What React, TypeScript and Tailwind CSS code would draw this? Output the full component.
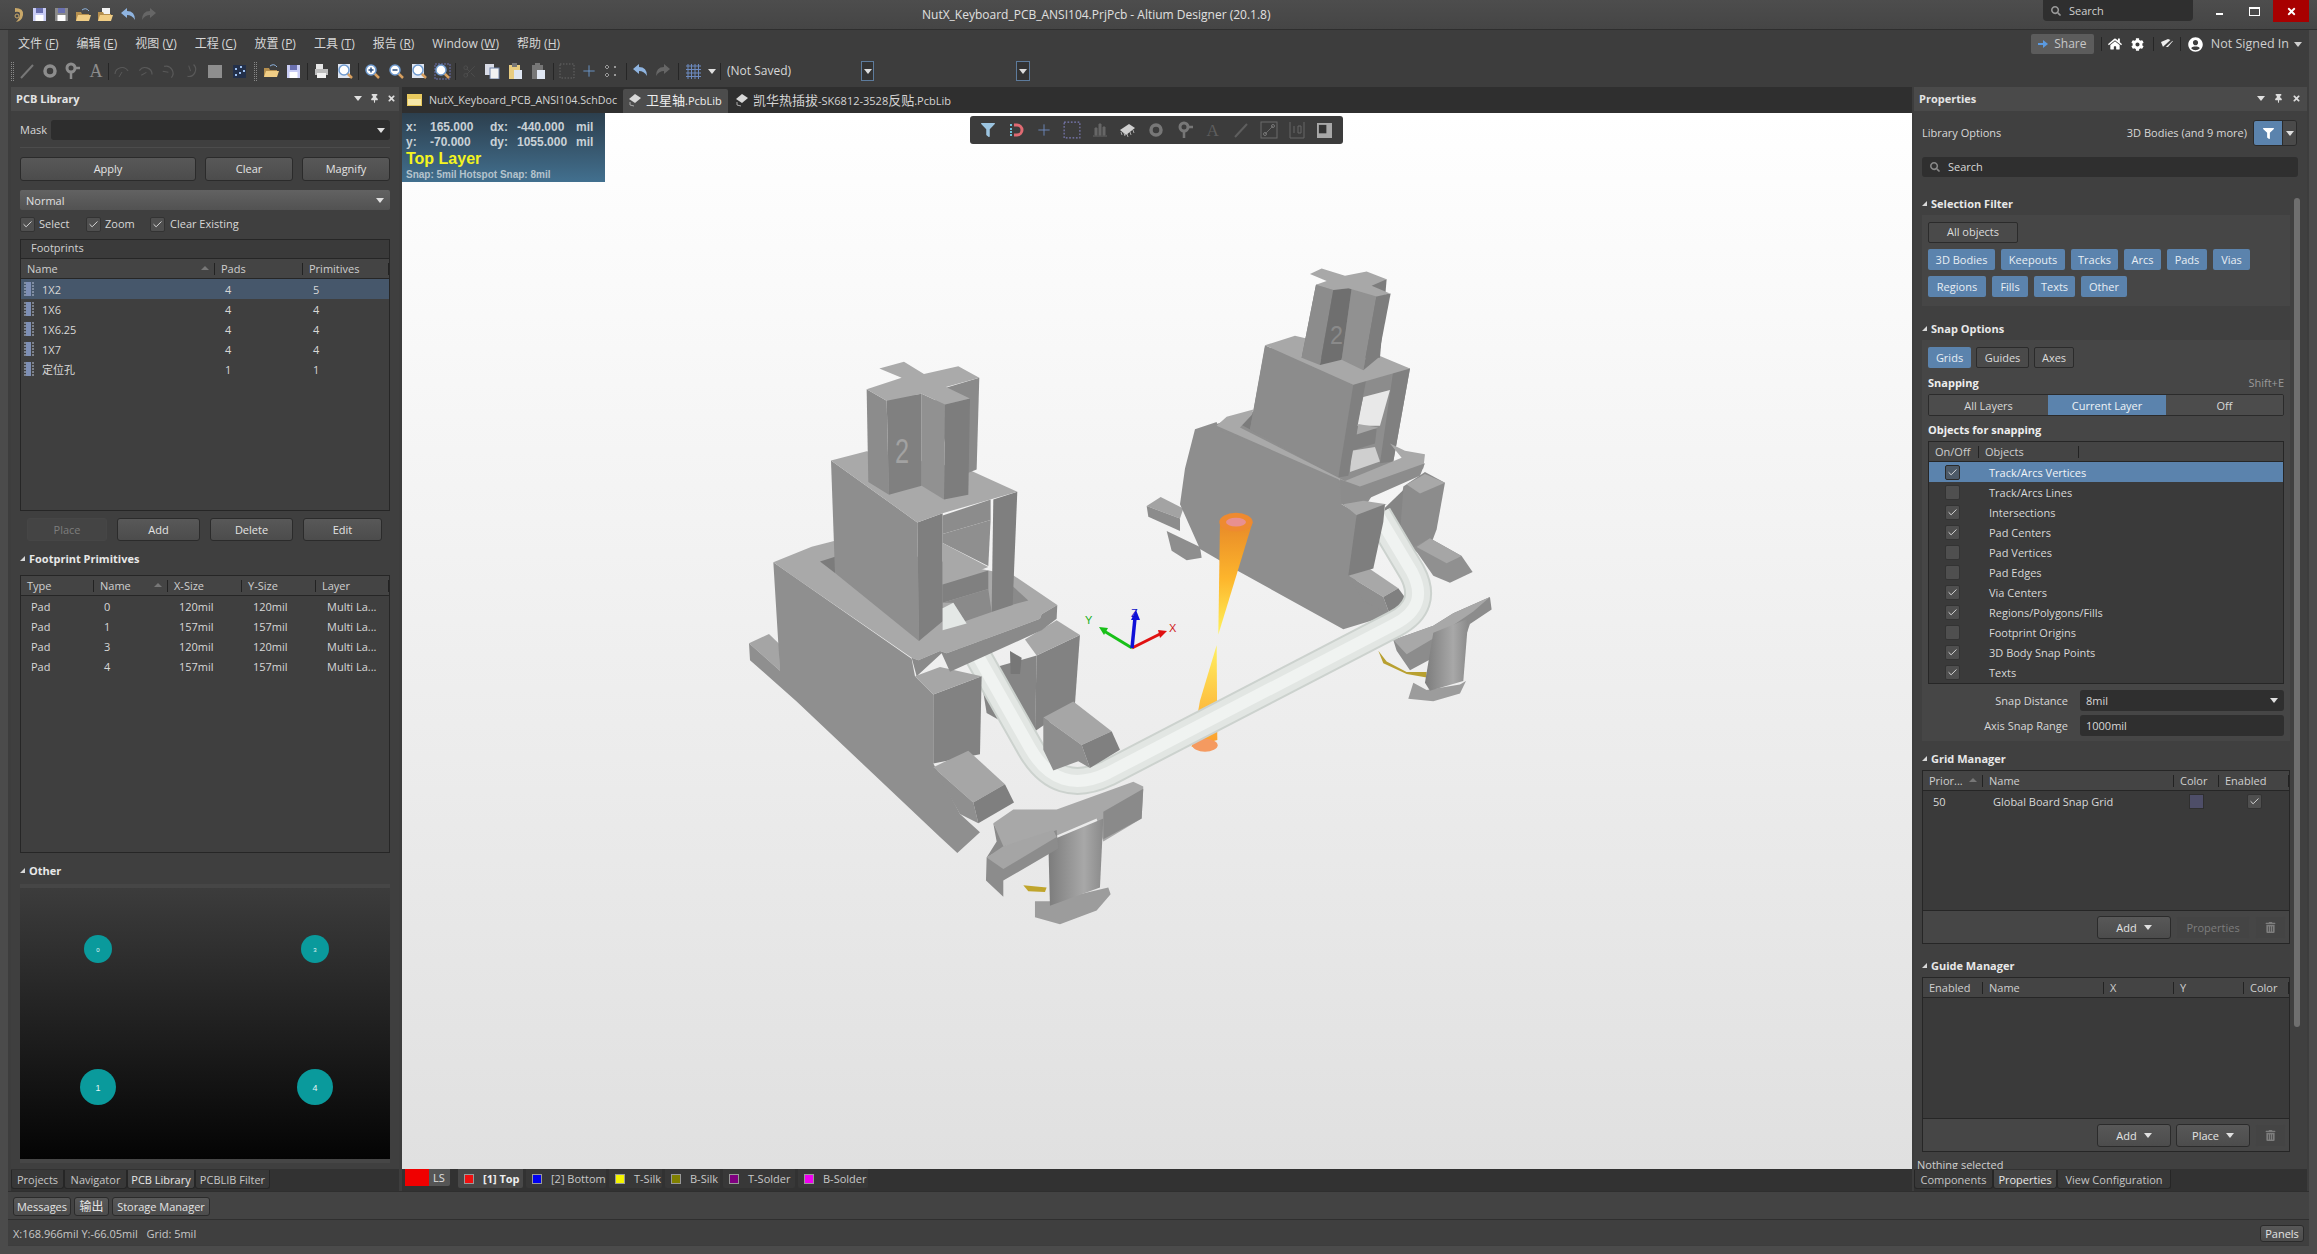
import { ReactNode } from 'react';
import { Check, Plus, Scissors } from 'lucide-react';
import { FaCog, FaFilter, FaHome, FaSearch, FaThumbtack, FaTimes, FaTrashAlt, FaUserCircle } from 'react-icons/fa';

// small toolbar drawings ----------------------------------------------------
const Floppy = ({ c = '#c9cdf5' }: { c?: string }) => (
  <svg width="15" height="15" viewBox="0 0 15 15"><rect x="1" y="1" width="13" height="13" fill={c} /><rect x="4" y="1" width="7" height="5" fill="#6a70b0" /><rect x="3.5" y="8" width="8" height="6" fill="#fff" /></svg>
);
const Folder = ({ second }: { second?: boolean }) => (
  <svg width="17" height="16" viewBox="0 0 17 16">
    {second && <rect x="5" y="1" width="8" height="9" fill="#f2f2f2" />}
    {!second && <path d="M7 3 Q11 0 14 4" fill="none" stroke="#8fb4e0" strokeWidth="1" />}
    <path d="M1 5h5l1 2h7v7H1z" fill="#b58f4e" /><path d="M3 8h13l-2 6H1z" fill="#f0cd85" />
  </svg>
);
const Arrow = ({ back, c }: { back?: boolean; c: string }) => (
  <svg width="16" height="14" viewBox="0 0 16 14" style={{ transform: back ? undefined : 'scaleX(-1)' }}>
    <path d="M1 5 L7 0 V3 Q15 3 15 12 Q12 7 7 7 V10 Z" fill={c} />
  </svg>
);
const Lens = ({ sign, boxed, paper }: { sign?: '+' | '-'; boxed?: boolean; paper?: boolean }) => (
  <svg width="17" height="17" viewBox="0 0 17 17">
    {paper && <rect x="1" y="1" width="12" height="14" fill="#dfe6f2" />}
    {boxed && <rect x="1" y="1" width="15" height="15" fill="none" stroke="#6a70b0" strokeDasharray="2 1" />}
    <path d="M10 10 L15 15" stroke="#d8a060" strokeWidth="2.5" />
    <circle cx="7" cy="7" r="5" fill="#fff" stroke="#6f9bd0" strokeWidth="1.5" />
    {sign && <path d="M4.5 7h5" stroke="#2b4f80" strokeWidth="1.5" />}
    {sign === '+' && <path d="M7 4.5v5" stroke="#2b4f80" strokeWidth="1.5" />}
  </svg>
);
const LineTool = ({ c = '#777' }: { c?: string }) => <svg width="16" height="16" viewBox="0 0 16 16"><path d="M2 15 L14 2" stroke={c} strokeWidth="2" /></svg>;
const PadTool = ({ c = '#8d8d8d' }: { c?: string }) => <svg width="16" height="16" viewBox="0 0 16 16"><circle cx="8" cy="8" r="5" fill="none" stroke={c} strokeWidth="3.5" /></svg>;
const ViaTool = ({ c = '#8d8d8d' }: { c?: string }) => (
  <svg width="16" height="18" viewBox="0 0 16 18"><circle cx="7" cy="6" r="4" fill="none" stroke={c} strokeWidth="3" /><path d="M7 10v7M11 6h5" stroke={c} strokeWidth="2.5" /></svg>
);
const ArcTool = ({ r = 0 }: { r?: number }) => (
  <svg width="16" height="16" viewBox="0 0 16 16" style={{ transform: `rotate(${r}deg)` }}><path d="M2 11 A7 7 0 0 1 15 8" fill="none" stroke="#595959" strokeWidth="1.2" /><path d="M6 14 L9 9" stroke="#595959" /></svg>
);
const Chip = ({ c = '#7e8fb5' }: { c?: string }) => (
  <svg width="12" height="14" viewBox="0 0 12 14"><rect x="2" y="0" width="5" height="14" fill={c} /><path d="M0 1h2M0 4h2M0 7h2M0 10h2M0 13h2M8 1h2M8 4h2M8 7h2M8 10h2M8 13h2" stroke="#b9c3d8" strokeWidth="1.2" /></svg>
);
const Doc = ({ c = '#e6e6e6' }: { c?: string }) => (
  <svg width="15" height="16" viewBox="0 0 15 16"><rect x="2" y="1" width="7" height="6" fill={c} /><rect x="1" y="6" width="13" height="6" fill="#bdbdbd" /><rect x="3" y="10" width="9" height="5" fill="#f2f2f2" /></svg>
);
const Clip = ({ c }: { c: string }) => (
  <svg width="16" height="17" viewBox="0 0 16 17"><rect x="2" y="2" width="11" height="14" fill={c} /><rect x="5" y="0" width="5" height="4" fill="#777" /><rect x="7" y="7" width="8" height="9" fill="#dfe6f2" /></svg>
);
const Copy2 = () => <svg width="16" height="16" viewBox="0 0 16 16"><rect x="1" y="1" width="9" height="11" fill="#d8dbe6" /><rect x="6" y="5" width="9" height="11" fill="#f2f2f2" stroke="#6f82a8" /></svg>;
const Dotted = ({ c = '#666', s = 16 }: { c?: string; s?: number }) => (
  <svg width={s} height={s} viewBox="0 0 16 16"><rect x="1" y="1" width="14" height="14" fill="none" stroke={c} strokeDasharray="1.5 1.5" /></svg>
);
const Align = () => <svg width="14" height="16" viewBox="0 0 14 16"><path d="M3 2l2 2-2 2-2-2zM3 10l2 2-2 2-2-2z" fill="none" stroke="#999" /><path d="M11 3v2M11 11v2" stroke="#999" strokeWidth="2" /></svg>;
const GridIcon = () => (
  <svg width="15" height="15" viewBox="0 0 15 15"><path d="M0 2h15M0 5.5h15M0 9h15M0 12.5h15M2 0v15M5.5 0v15M9 0v15M12.5 0v15" stroke="#6d8bc0" /></svg>
);
const Caret = ({ c = '#e0e0e0' }: { c?: string }) => <svg width="8" height="5" viewBox="0 0 8 5"><path d="M0 0h8L4 5z" fill={c} /></svg>;

const Grip = () => <div className="h-[19px] w-[3px] shrink-0 border-x border-dotted border-[#888]" />;
const Sep = () => <div className="h-[17px] w-px shrink-0 bg-[#262626]" />;
const Slot = ({ w = 'w-[23px]', children }: { w?: string; children: ReactNode }) => (
  <div className={`flex shrink-0 items-center justify-center ${w}`}>{children}</div>
);

// shared bits -----------------------------------------------------------------
const Btn = ({ w, h = 'h-[23px]', children, off }: { w: string; h?: string; children: ReactNode; off?: boolean }) => (
  <div className={`flex shrink-0 items-center justify-center gap-[7px] rounded-[3px] border ${w} ${h} ${off ? 'border-[#464646] bg-[#444] text-[#7d7d7d]' : 'border-[#2b2b2b] bg-gradient-to-b from-[#585858] to-[#4c4c4c] text-[#e4e4e4]'}`}>
    {children}
  </div>
);
const Blue = ({ w, children }: { w: string; children: ReactNode }) => (
  <div className={`flex h-[21px] shrink-0 items-center justify-center rounded-[2px] bg-[#5b83ad] text-[#e8eef4] ${w}`}>{children}</div>
);
const Gray = ({ w, children }: { w: string; children: ReactNode }) => (
  <div className={`flex h-[21px] shrink-0 items-center justify-center rounded-[2px] border border-[#2b2b2b] bg-[#4a4a4a] text-[#dcdcdc] ${w}`}>{children}</div>
);
const Box = ({ on, dark }: { on?: boolean; dark?: boolean }) => (
  <div className={`flex h-[15px] w-[15px] shrink-0 items-center justify-center rounded-[2px] border ${dark ? 'border-[#2a2a2a] bg-[#4d5a68]' : 'border-[#333] bg-[#4f4f4f]'}`}>
    {on && <Check size={11} strokeWidth={1.8} className="text-[#f2f2f2]" />}
  </div>
);
const SectionTitle = ({ children, cls }: { children: ReactNode; cls: string }) => (
  <div className={`flex h-[16px] shrink-0 items-center gap-[4px] font-bold text-[#e8e8e8] ${cls}`}>
    <svg width="5" height="5" viewBox="0 0 5 5"><path d="M5 0v5H0z" fill="#d8d8d8" /></svg>
    {children}
  </div>
);
const Th = ({ w, children, sort }: { w: string; children: ReactNode; sort?: boolean }) => (
  <div className={`relative flex h-full shrink-0 items-center pl-[6px] text-[#cfcfcf] ${w}`}>
    {children}
    {sort && <svg className="absolute right-[6px] top-[7px]" width="8" height="4" viewBox="0 0 8 4"><path d="M4 0l4 4H0z" fill="#777" /></svg>}
    <div className="absolute right-0 top-[4px] h-[12px] w-px bg-[#222]" />
  </div>
);
const DockTab = ({ w, on, children }: { w: string; on?: boolean; children: ReactNode }) => (
  <div className={`flex h-[19px] shrink-0 items-center justify-center rounded-b-[3px] border border-t-0 border-[#262626] ${w} ${on ? 'bg-[#444] text-[#e8e8e8]' : 'bg-[#383838] text-[#c6c6c6]'}`}>{children}</div>
);
const LayerTab = ({ w, c, on, children }: { w: string; c: string; on?: boolean; children: ReactNode }) => (
  <div className={`flex h-[19px] shrink-0 items-center gap-[9px] rounded-b-[2px] pl-[6px] ${w} ${on ? 'bg-[#484848] font-bold text-[#eee]' : 'bg-[#383838] text-[#c8c8c8]'}`}>
    <div className="h-[10px] w-[10px] border border-[#999]" style={{ background: c }} />
    {children}
  </div>
);
const Cjk = ({ children }: { children: ReactNode }) => <span className="text-[13px]">{children}</span>;

const snapObjects: [string, boolean][] = [
  ['Track/Arcs Vertices', true],
  ['Track/Arcs Lines', false],
  ['Intersections', true],
  ['Pad Centers', true],
  ['Pad Vertices', false],
  ['Pad Edges', false],
  ['Via Centers', true],
  ['Regions/Polygons/Fills', true],
  ['Footprint Origins', false],
  ['3D Body Snap Points', true],
  ['Texts', true],
];
const footprints = [['1X2', '4', '5'], ['1X6', '4', '4'], ['1X6.25', '4', '4'], ['1X7', '4', '4'], ['定位孔', '1', '1']];
const pads = [['0', '120mil'], ['1', '157mil'], ['3', '120mil'], ['4', '157mil']];

// the 3D model -----------------------------------------------------------------
const P = ({ f, p }: { f: string; p: string }) => <polygon fill={f} points={p} />;

function LeftRear() {
  return (
    <g transform="translate(720 240) scale(0.3333 0.4592)">
      <P f="#858585" p="780,940 950,905 945,1090 800,1030" />
      <P f="#828282" p="950,905 1080,860 1065,1010 945,1070" />
      <P f="#a7a7a7" p="915,870 1010,828 1080,860 950,905" />
      <P f="#777" p="870,895 905,910 900,945 872,945" />
    </g>
  );
}
function LeftFront() {
  return (
    <g transform="translate(720 240) scale(0.3333 0.4592)">
      {/* lower body */}
      <P f="#a5a5a5" p="87,878 147,858 178,880 180,938" />
      <P f="#8f8f8f" p="160,702 575,912 585,950 640,990 640,1140 720,1250 780,1290 712,1335 660,1300 230,1005 90,915 87,878 180,938" />
      <P f="#828282" p="640,990 785,950 780,1120 640,1140" />
      <P f="#a6a6a6" p="585,950 660,930 785,950 640,990" />
      {/* front tab */}
      <P f="#a6a6a6" p="640,1148 745,1112 855,1185 760,1225" />
      <P f="#8f8f8f" p="640,1148 760,1225 775,1270 720,1250" />
      <P f="#7f7f7f" p="760,1225 855,1185 882,1225 775,1270" />
      {/* frame */}
      <P f="#a9a9a9" p="160,702 275,668 345,655 880,730 1012,795 965,815 960,825 680,900 660,895 595,915 575,910 215,730" />
      <P f="#8a8a8a" p="575,910 595,915 660,895 680,900 960,825 965,815 1012,795 1010,825 965,850 690,940 665,900 590,950" />
      <P f="#7c7c7c" p="300,700 345,690 345,725" />
      <P f="#8a8a8a" p="880,755 925,785 850,800 815,790" />
      {/* tower */}
      <P f="#8e8e8e" p="333,480 592,615 597,873 345,725" />
      <P f="#7f7f7f" p="592,615 668,595 668,830 597,873" />
      <P f="#7f7f7f" p="820,565 892,548 878,795 815,810" />
      <P f="#8c8c8c" p="668,600 812,565 812,610 668,640" />
      <P f="#8f8f8f" p="668,640 812,610 805,710 668,660" />
      <P f="#a8a8a8" p="668,660 805,712 668,750" />
      <P f="#808080" p="668,750 805,720 805,760 668,790" />
      <P f="#8a8a8a" p="668,790 805,760 815,810 735,830 700,790" />
      <P f="#e4e8e6" p="668,802 700,790 740,835 668,850" />
      <P f="#a9a9a9" p="333,480 440,460 745,500 892,548 668,595 592,615" />
      {/* stem */}
      <P f="#8a8a8a" p="640,330 778,300 770,500 700,520" />
      <P f="#8c8c8c" p="440,325 500,350 507,555 445,527" />
      <P f="#808080" p="500,345 605,335 605,535 507,555" />
      <P f="#919191" p="605,335 675,358 672,565 605,535" />
      <P f="#7d7d7d" p="675,358 750,345 745,555 672,565" />
      <P f="#aaa" p="478,280 552,265 612,292 715,275 778,300 678,320 750,345 675,358 605,335 500,350 440,325 545,300" />
      <text x="525" y="485" fontSize="76" fill="#a2a2a2" fontFamily="Liberation Sans, sans-serif">2</text>
      {/* right tab sits over the wire */}
      <P f="#a6a6a6" p="970,1040 1060,1005 1175,1070 1085,1100" />
      <P f="#8e8e8e" p="970,1040 1085,1100 1110,1150 1075,1135 1000,1155 970,1110" />
      <P f="#808080" p="1085,1100 1175,1070 1200,1110 1110,1150" />
      {/* bottom clip */}
      <P f="#8a8a8a" p="820,1270 860,1320 800,1345 830,1310" />
      <P f="#a8a8a8" p="820,1270 880,1240 1010,1240 1240,1180 1270,1190 1265,1260 1150,1310 1130,1260 1000,1300 850,1320" />
      <P f="#8a8a8a" p="1150,1245 1270,1195 1265,1260 1150,1305" />
      <P f="#c0a52c" p="910,1405 980,1410 975,1420 925,1418" />
      <P f="#9c9c9c" p="945,1440 990,1440 1165,1410 1172,1425 1130,1460 1020,1490 945,1475" />
      <P f="url(#cyl)" p="985,1310 1150,1260 1140,1410 990,1450" />
      <P f="#8c8c8c" p="800,1345 1010,1285 1015,1325 850,1395 850,1430 798,1395" />
      <P f="#a5a5a5" p="800,1345 850,1320 1000,1285 1010,1300 850,1370" />
    </g>
  );
}
const rightScale = 'translate(1100 240) scale(0.3333 0.3571)';
function RightBody() {
  return (
    <g transform={rightScale}>
      <P f="#8c8c8c" p="910,690 975,650 1035,680 1010,810 990,860 960,880 890,830" />
      <P f="#858585" p="855,750 910,700 900,820 850,790" />
      <P f="#a8a8a8" p="920,685 975,655 1035,680 960,710" />
      <P f="#909090" p="940,860 990,835 1085,885 1118,930 1050,960 1000,940" />
      <P f="#a6a6a6" p="950,860 990,835 1085,885 1040,905" />
      {/* foot */}
      <P f="#8e8e8e" p="200,815 300,860 305,890 260,897 215,870" />
      <P f="#a3a3a3" p="140,745 182,720 250,752 240,780" />
      <P f="#8c8c8c" p="140,745 240,780 240,815 145,775" />
      {/* backing so no slits show between the faces */}
      <P f="#8e8e8e" p="350,515 460,480 495,300 930,360 880,620 780,770 350,530" />
      {/* body */}
      <P f="#8e8e8e" p="285,530 350,510 355,530 715,665 725,740 780,770 750,935 870,1050 730,1090 410,925 300,865 240,740 255,640" />
      {/* tower */}
      <P f="#808080" p="880,365 930,360 880,620 840,625" />
      <P f="#8c8c8c" p="800,385 875,365 870,420 790,440" />
      <P f="#e8e8e8" p="790,440 870,420 840,520 770,520" />
      <P f="#808080" p="770,520 830,530 825,570 755,590" />
      <P f="#a8a8a8" p="775,515 835,525 770,545" />
      <P f="#cfcfcf" p="755,590 825,580 840,620 750,650" />
      <P f="#7c7c7c" p="420,515 460,485 450,530 715,665 735,675" />
      <P f="#8c8c8c" p="495,295 760,405 715,665 450,530" />
      <P f="#808080" p="760,405 800,385 745,660 715,665" />
      <P f="#a8a8a8" p="495,295 585,268 840,325 930,360 760,405" />
      {/* frame */}
      <P f="#a9a9a9" p="350,520 380,495 460,475 455,490 420,525 735,675 905,610 870,570 915,590 975,600 970,640 780,695 740,690 715,670" />
      <P f="#8c8c8c" p="720,670 780,690 975,625 960,660 790,730 725,740" />
      {/* stem */}
      <P f="#7d7d7d" p="648,125 860,110 840,330 605,330" />
      <P f="#8c8c8c" p="648,125 700,140 660,350 605,330" />
      <P f="#6f6f6f" p="700,140 755,135 725,335 660,350" />
      <P f="#919191" p="755,135 830,155 790,365 725,335" />
      <P f="#7d7d7d" p="830,155 872,150 835,330 790,365" />
      <P f="#a8a8a8" p="630,95 665,80 735,100 800,88 860,110 815,128 870,150 830,158 745,135 700,140 648,125 680,115" />
      <text x="690" y="290" fontSize="70" fill="#8a8a8a" fontFamily="Liberation Sans, sans-serif">2</text>
      {/* front tab and clip, wire runs over them */}
      <P f="#a8a8a8" p="745,940 800,915 895,975 850,1000" />
      <P f="#8e8e8e" p="745,940 850,1000 870,1050 790,1010" />
      <P f="#808080" p="850,1000 895,975 930,1020 870,1050" />
      <P f="#b8a030" p="835,1150 860,1180 920,1210 980,1210 980,1225 920,1215 850,1185" />
      <P f="#8c8c8c" p="880,1120 1000,1080 1060,1045 1170,1000 1175,1035 1110,1075 1090,1130 1000,1170 930,1205 890,1150" />
      <P f="#a8a8a8" p="880,1120 1000,1080 1060,1045 1170,1000 1120,1040 1010,1110 920,1160" />
      <P f="#9c9c9c" p="925,1285 940,1240 980,1260 1080,1245 1098,1235 1080,1270 1000,1292" />
      <P f="url(#cyl)" p="1000,1100 1105,1060 1090,1235 990,1262 975,1240" />
      {/* cone */}
      <polygon fill="url(#cone)" points="360,790 458,790 355,1105" />
      <polygon fill="url(#cone2)" points="350,1135 352,1400 275,1420 300,1290" />
      <ellipse cx="408" cy="790" rx="50" ry="26" fill="#ee8a30" />
      <ellipse cx="408" cy="790" rx="30" ry="12" fill="#e89090" />
      <ellipse cx="315" cy="1415" rx="38" ry="18" fill="#f59a60" />
    </g>
  );
}
function RightOver() {
  return (
    <g transform={rightScale}>
      <P f="#a8a8a8" p="730,740 790,730 860,740 775,775" />
      <P f="#7e7e7e" p="770,770 855,740 850,790 820,920 745,940" />
    </g>
  );
}
function Model() {
  const wire = 'M948 603 L1030 748 Q1058 797 1108 773 L1395 624 Q1430 606 1412 572 L1378 515';
  return (
    <svg className="h-full w-full" viewBox="402 113 1510 1056">
      <defs>
        <linearGradient id="cyl" x1="0" x2="1" y1="0" y2="0">
          <stop offset="0" stopColor="#7c7c7c" /><stop offset="0.65" stopColor="#a8a8a8" /><stop offset="1" stopColor="#8a8a8a" />
        </linearGradient>
        <linearGradient id="cone" x1="0" x2="0" y1="0" y2="1">
          <stop offset="0" stopColor="#e88a28" /><stop offset="0.5" stopColor="#fdb52c" /><stop offset="1" stopColor="#fff35a" />
        </linearGradient>
        <linearGradient id="cone2" x1="0" x2="0" y1="0" y2="1">
          <stop offset="0" stopColor="#fff060" /><stop offset="1" stopColor="#fc9d2a" />
        </linearGradient>
      </defs>
      <LeftRear />
      <RightBody />
      <path d={wire} fill="none" stroke="#ccd2ce" strokeWidth="28" />
      <path d={wire} fill="none" stroke="#e2e6e3" strokeWidth="24" />
      <path d={wire} fill="none" stroke="#f0f3f1" strokeWidth="12" />
      <RightOver />
      <LeftFront />
      {/* axis gizmo */}
      <path d="M1132 648 L1160 634" stroke="#e01010" strokeWidth="3" />
      <path d="M1167 631 L1158 630 L1160 638 Z" fill="#e01010" />
      <text x="1169" y="632" fontSize="11" fill="#d01818" fontFamily="Liberation Sans, sans-serif">X</text>
      <path d="M1132 648 L1104 631" stroke="#18c018" strokeWidth="3" />
      <path d="M1099 627 L1108 628 L1104 635 Z" fill="#18c018" />
      <text x="1085" y="624" fontSize="11" fill="#18b018" fontFamily="Liberation Sans, sans-serif">Y</text>
      <path d="M1132 648 L1135 618" stroke="#1010d8" strokeWidth="3.5" />
      <path d="M1136 610 L1131 620 L1140 620 Z" fill="#1010d8" />
      <text x="1131" y="617" fontSize="11" fill="#1010c8" fontFamily="Liberation Sans, sans-serif">Z</text>
    </svg>
  );
}

const floatIcons: ReactNode[] = [
  <FaFilter size={14} className="text-[#9cc4e0]" />,
  <svg width="16" height="16" viewBox="0 0 16 16"><path d="M6 3h3a5 5 0 0 1 0 10H6" fill="none" stroke="#e06a72" strokeWidth="3" /><path d="M2 3h2M2 7h2M2 10h2M2 13h2" stroke="#6cc0d8" strokeWidth="2" /></svg>,
  <Plus size={18} strokeWidth={1.2} className="text-[#6d8bc0]" />,
  <Dotted c="#7d7db8" s={18} />,
  <svg width="16" height="16" viewBox="0 0 16 16"><path d="M3 6h2v7H3zM7 2h2v11H7zM11 5h2v8h-2zM1 14h14" stroke="#666" fill="#666" /></svg>,
  <svg width="18" height="16" viewBox="0 0 18 16"><path d="M1 8L10 2l6 4-9 7z" fill="#d0d0d0" /><path d="M2 10l1 3M5 11l1 3M8 12l1 3M11 10l1 3M14 8l1 3" stroke="#aaa" /></svg>,
  <PadTool c="#777" />,
  <ViaTool c="#777" />,
  <span className="font-['Liberation_Serif',serif] text-[17px] leading-none text-[#5e5e5e]">A</span>,
  <LineTool c="#5e5e5e" />,
  <svg width="18" height="18" viewBox="0 0 18 18"><rect x="1" y="1" width="16" height="16" fill="none" stroke="#6a6a6a" /><path d="M5 13L13 5" stroke="#6a6a6a" /><circle cx="5" cy="13" r="1.5" fill="none" stroke="#777" /><circle cx="13" cy="5" r="1.5" fill="none" stroke="#777" /></svg>,
  <svg width="18" height="18" viewBox="0 0 18 18"><path d="M2 1v16h14V1" fill="none" stroke="#666" /><path d="M6 5v7M10 5v7h3V5z" fill="none" stroke="#666" /></svg>,
  <svg width="15" height="15" viewBox="0 0 16 16"><rect x="0" y="0" width="16" height="16" fill="#a8a8a8" /><rect x="2" y="2" width="8" height="9" fill="#333" /></svg>,
];

export default function App() {
  return (
    <div className="flex h-[1254px] w-[2317px] flex-col overflow-hidden bg-[#4b4b4b] font-['Open_Sans','Noto_Sans_CJK_SC',sans-serif] text-[11px] leading-none text-[#d8d8d8]">
      {/* title bar */}
      <div className="flex h-[30px] shrink-0 items-start border-b border-[#2e2e2e] bg-gradient-to-b from-[#4d4d4d] to-[#454545]">
        <div className="flex h-[29px] w-[922px] shrink-0 items-center pl-[10px]">
          <Slot w="w-[18px]">
            <svg width="12" height="18" viewBox="0 0 12 18"><path d="M2 2 Q11 2 10 9 Q9 15 3 16 Q7 12 7 8 Q7 5 2 6Z" fill="#c9a869" /><circle cx="4" cy="10" r="2" fill="none" stroke="#c9a869" /></svg>
          </Slot>
          <Slot><Floppy /></Slot>
          <Slot w="w-[21px]"><Floppy c="#8a8a8a" /></Slot>
          <Slot w="w-[22px]"><Folder /></Slot>
          <Slot w="w-[22px]"><Folder second /></Slot>
          <Slot><Arrow back c="#8fb4e0" /></Slot>
          <Slot w="w-[20px]"><Arrow c="#666" /></Slot>
        </div>
        <div className="flex h-[29px] flex-1 items-center pt-[1px] text-[12px] text-[#e0e0e0]">NutX_Keyboard_PCB_ANSI104.PrjPcb - Altium Designer (20.1.8)</div>
        <div className="flex h-[21px] w-[150px] shrink-0 items-center gap-[8px] rounded-b-[4px] bg-[#2f2f2f] pl-[8px] text-[#cfcfcf]">
          <FaSearch size={10} className="text-[#999]" />Search
        </div>
        <div className="flex h-[22px] w-[80px] shrink-0 items-center justify-around pl-[10px]">
          <div className="mt-[6px] h-[2px] w-[7px] bg-white" />
          <div className="h-[9px] w-[11px] border border-t-2 border-white" />
        </div>
        <div className="flex h-[22px] w-[36px] shrink-0 items-center justify-center bg-[#a80000]"><FaTimes size={11} className="text-white" /></div>
        <div className="w-[8px] shrink-0" />
      </div>

      <div className="mx-[8px] flex h-[1216px] shrink-0 flex-col bg-[#3d3d3d]">
        {/* menu */}
        <div className="flex h-[30px] shrink-0 items-center pb-[2px] pl-[10px] pr-[7px] text-[#d6d6d6]">
          <div className="flex items-center gap-[18px] text-[12px]">
            {[['文件', 'F'], ['编辑', 'E'], ['视图', 'V'], ['工程', 'C'], ['放置', 'P'], ['工具', 'T'], ['报告', 'R'], ['Window', 'W'], ['帮助', 'H']].map(([n, k]) => (
              <span key={n} className="whitespace-nowrap">{n} (<u>{k}</u>)</span>
            ))}
          </div>
          <div className="flex-1" />
          <div className="flex h-[20px] w-[63px] items-center justify-center gap-[6px] rounded-[2px] bg-[#5c5c5c] text-[12px] text-[#c8c8c8]">
            <svg width="10" height="8" viewBox="0 0 10 8"><path d="M0 3h5V0l5 4-5 4V5H0z" fill="#5b9ae0" /></svg>Share
          </div>
          <div className="ml-[7px] h-[14px] w-px bg-[#262626]" />
          <FaHome size={14} className="ml-[6px] text-white" />
          <FaCog size={13} className="ml-[9px] text-white" />
          <div className="ml-[9px] h-[14px] w-px bg-[#262626]" />
          <svg className="ml-[6px]" width="14" height="13" viewBox="0 0 14 13"><path d="M1 4 L8 1 L13 3 L8 9 L3 9Z" fill="#eee" /><path d="M1 12L13 1" stroke="#3d3d3d" strokeWidth="2" /></svg>
          <div className="ml-[6px] h-[14px] w-px bg-[#262626]" />
          <FaUserCircle size={15} className="ml-[7px] text-white" />
          <span className="ml-[8px] text-[12.5px] text-[#cfcfcf]">Not Signed In</span>
          <div className="ml-[5px]"><Caret c="#cfcfcf" /></div>
        </div>

        {/* toolbar */}
        <div className="flex h-[25px] shrink-0 items-center pb-[3px] pl-[3px]">
          <Grip />
          <Slot w="w-[26px]"><LineTool /></Slot>
          <Slot w="w-[20px]"><PadTool /></Slot>
          <Slot w="w-[24px]"><ViaTool /></Slot>
          <Slot w="w-[24px]"><span className="font-['Liberation_Serif',serif] text-[18px] text-[#8c8c8c]">A</span></Slot>
          <Sep />
          <Slot w="w-[24px]"><ArcTool /></Slot>
          <Slot w="w-[26px]"><ArcTool r={30} /></Slot>
          <Slot w="w-[20px]"><ArcTool r={70} /></Slot>
          <Slot w="w-[26px]"><ArcTool r={130} /></Slot>
          <Slot w="w-[20px]"><div className="h-[13px] w-[14px] bg-[#8e8e8e]" /></Slot>
          <Slot w="w-[29px]">
            <svg width="15" height="15" viewBox="0 0 15 15"><rect x="1" y="1" width="13" height="13" fill="#23304a" /><path d="M3 4h2v2H3zM8 2h2v2H8zM11 6h2v2h-2zM3 10h2v2H3zM7 8h2v2H7z" fill="#9cc0f0" /></svg>
          </Slot>
          <Grip />
          <Slot w="w-[28px]"><Folder /></Slot>
          <Slot w="w-[16px]"><Floppy /></Slot>
          <div className="w-[6px] shrink-0" /><Sep />
          <Slot w="w-[26px]"><Doc /></Slot>
          <Slot w="w-[22px]"><Lens paper /></Slot>
          <div className="w-[2px] shrink-0" /><Sep />
          <Slot w="w-[26px]"><Lens sign="+" /></Slot>
          <Slot w="w-[22px]"><Lens sign="-" /></Slot>
          <Slot w="w-[24px]"><Lens paper /></Slot>
          <Slot w="w-[22px]"><Lens boxed /></Slot>
          <div className="w-[2px] shrink-0" /><Sep />
          <Slot w="w-[26px]"><Scissors size={15} strokeWidth={1} className="text-[#555]" /></Slot>
          <Slot w="w-[20px]"><Copy2 /></Slot>
          <Slot w="w-[26px]"><Clip c="#e8cc80" /></Slot>
          <Slot w="w-[20px]"><Clip c="#777" /></Slot>
          <div className="w-[5px] shrink-0" /><Sep />
          <Slot w="w-[26px]"><Dotted /></Slot>
          <Slot w="w-[18px]"><Plus size={18} strokeWidth={1.2} className="text-[#6d9bd0]" /></Slot>
          <Slot w="w-[26px]"><Align /></Slot>
          <div className="w-[2px] shrink-0" /><Sep />
          <Slot w="w-[26px]"><Arrow back c="#8fb4e0" /></Slot>
          <Slot w="w-[20px]"><Arrow c="#666" /></Slot>
          <div className="w-[5px] shrink-0" /><Sep />
          <Slot w="w-[28px]"><GridIcon /></Slot>
          <Slot w="w-[10px]"><Caret /></Slot>
          <div className="w-[3px] shrink-0" /><Sep />
          <span className="ml-[6px] w-[134px] shrink-0 text-[12px]">(Not Saved)</span>
          <div className="flex h-[20px] w-[13px] shrink-0 items-center justify-center border border-[#5d7b9c] bg-[#333]"><Caret c="#ddd" /></div>
          <div className="w-[142px] shrink-0" />
          <div className="flex h-[20px] w-[14px] shrink-0 items-center justify-center border border-[#5d7b9c] bg-[#333]"><Caret c="#ddd" /></div>
        </div>

        {/* main row */}
        <div className="flex h-[1106px] shrink-0 pt-[2px]">
          {/* left panel */}
          <div className="ml-[3px] flex h-[1104px] w-[388px] shrink-0 flex-col">
            <div className="flex h-[24px] shrink-0 items-center justify-between bg-[#4a4a4a] pb-[1px] pl-[5px] pr-[3px] font-bold text-[#e4e4e4]">
              PCB Library
              <div className="flex items-center gap-[8px]"><Caret /><FaThumbtack size={9} className="text-[#ddd]" /><FaTimes size={9} className="text-[#ddd]" /></div>
            </div>
            <div className="flex h-[1058px] shrink-0 flex-col bg-[#3f3f3f] px-[9px]">
              <div className="mt-[9px] flex h-[20px] shrink-0 items-center gap-[6px]">
                <span className="-mt-[2px] w-[25px]">Mask</span>
                <div className="flex h-full flex-1 items-center justify-end rounded-[3px] bg-[#2d2d2d] pr-[5px]"><Caret /></div>
              </div>
              <div className="mt-[7px] h-px shrink-0 bg-[#4c4c4c]" />
              <div className="mt-[9px] flex gap-[9px] [&>div]:pb-[2px]">
                <Btn w="w-[176px]" h="h-[24px]">Apply</Btn>
                <Btn w="w-[88px]" h="h-[24px]">Clear</Btn>
                <Btn w="w-[88px]" h="h-[24px]">Magnify</Btn>
              </div>
              <div className="mt-[9px] flex h-[20px] shrink-0 items-center justify-between rounded-[2px] bg-gradient-to-b from-[#626262] to-[#525252] px-[6px] text-[#e0e0e0]">Normal<Caret /></div>
              <div className="mt-[7px] flex h-[14px] shrink-0 items-center">
                <Box on /><span className="ml-[4px] mt-[-1px] w-[47px]">Select</span>
                <Box on /><span className="ml-[4px] mt-[-1px] w-[45px]">Zoom</span>
                <Box on /><span className="ml-[5px] mt-[-1px]">Clear Existing</span>
              </div>
              <div className="mt-[8px] flex h-[272px] shrink-0 flex-col border border-[#262626]">
                <div className="flex h-[19px] shrink-0 items-center border-b border-[#262626] bg-[#3a3a3a] pb-[4px] pl-[10px] text-[#d0d0d0]">Footprints</div>
                <div className="flex h-[20px] shrink-0 border-b border-[#262626] bg-[#444]">
                  <Th w="w-[194px]" sort>Name</Th><Th w="w-[88px]">Pads</Th><Th w="w-[86px]">Primitives</Th>
                </div>
                {footprints.map(([n, a, b], i) => (
                  <div key={n} className={`flex h-[20px] shrink-0 items-center ${i === 0 ? 'bg-[#46576b]' : ''}`}>
                    <div className="flex w-[194px] items-center gap-[6px] pl-[3px]"><Chip />{n}</div>
                    <div className="w-[88px] pl-[10px]">{a}</div>
                    <div className="pl-[10px]">{b}</div>
                  </div>
                ))}
              </div>
              <div className="mt-[7px] flex gap-[10px] pl-[7px]">
                <Btn w="w-[80px]" off>Place</Btn>
                <Btn w="w-[83px]">Add</Btn>
                <Btn w="w-[83px]">Delete</Btn>
                <Btn w="w-[79px]">Edit</Btn>
              </div>
              <SectionTitle cls="mt-[9px]">Footprint Primitives</SectionTitle>
              <div className="mt-[9px] flex h-[278px] shrink-0 flex-col border border-[#262626]">
                <div className="flex h-[20px] shrink-0 border-b border-[#262626] bg-[#444]">
                  <Th w="w-[73px]">Type</Th><Th w="w-[74px]" sort>Name</Th><Th w="w-[74px]">X-Size</Th><Th w="w-[74px]">Y-Size</Th><Th w="w-[73px]">Layer</Th>
                </div>
                {pads.map(([n, s]) => (
                  <div key={n} className="flex h-[20px] shrink-0 items-center first:mt-[1px]">
                    <div className="w-[73px] pl-[10px]">Pad</div>
                    <div className="w-[74px] pl-[10px]">{n}</div>
                    <div className="w-[74px] pl-[11px]">{s}</div>
                    <div className="w-[74px] pl-[11px]">{s}</div>
                    <div className="pl-[11px]">Multi La...</div>
                  </div>
                ))}
              </div>
              <SectionTitle cls="mt-[9px]">Other</SectionTitle>
              <div className="mt-[6px] h-[279px] shrink-0 bg-[#464646] py-[4px]">
                <svg className="h-[271px] w-full" viewBox="19 888 370 271">
                  <defs>
                    <linearGradient id="pv" x1="0" x2="0" y1="0" y2="1"><stop offset="0" stopColor="#3c3c3c" /><stop offset="1" stopColor="#040404" /></linearGradient>
                  </defs>
                  <rect x="19" y="888" width="370" height="271" fill="url(#pv)" />
                  <circle cx="97" cy="949" r="14" fill="#0a9a9c" />
                  <circle cx="314" cy="949" r="14" fill="#0a9a9c" />
                  <circle cx="97" cy="1087" r="18" fill="#0a9a9c" />
                  <circle cx="314" cy="1087" r="18" fill="#0a9a9c" />
                  <g textAnchor="middle" fill="#e4f4f4" fontFamily="Liberation Sans, sans-serif">
                    <text x="97" y="952" fontSize="6">0</text>
                    <text x="314" y="952" fontSize="6">3</text>
                    <text x="97" y="1091" fontSize="9">1</text>
                    <text x="314" y="1091" fontSize="9">4</text>
                  </g>
                </svg>
              </div>
            </div>
            <div className="flex h-[22px] shrink-0 bg-[#323232] pt-[1px]">
              <DockTab w="w-[53px]">Projects</DockTab>
              <DockTab w="w-[63px]">Navigator</DockTab>
              <DockTab w="w-[68px]" on>PCB Library</DockTab>
              <DockTab w="w-[75px]">PCBLIB Filter</DockTab>
            </div>
          </div>

          {/* centre */}
          <div className="ml-[3px] flex w-[1510px] shrink-0 flex-col">
            <div className="flex h-[26px] shrink-0 items-end bg-[#2f2f2f] pl-[2px]">
              <div className="flex h-[24px] w-[219px] shrink-0 items-center gap-[7px] pb-[2px] pl-[3px] text-[10.7px] text-[#d4d4d4]">
                <svg width="15" height="12" viewBox="0 0 15 12"><rect width="15" height="12" fill="#e8c95e" /><rect x="1" y="5" width="13" height="6" fill="#f6e7a8" /></svg>
                NutX_Keyboard_PCB_ANSI104.SchDoc
              </div>
              <div className="flex h-[24px] w-[105px] shrink-0 items-center gap-[4px] rounded-t-[2px] bg-[#4c4c4c] pb-[2px] pl-[5px] text-[#eee]">
                <svg width="14" height="14" viewBox="0 0 14 14"><path d="M7 1l6 4-6 5-6-4z" fill="#d8d8d8" /><path d="M2 9v3l4 1" fill="none" stroke="#aaa" /></svg>
                <span><Cjk>卫星轴</Cjk>.PcbLib</span>
              </div>
              <div className="flex h-[24px] items-center gap-[4px] pb-[2px] pl-[7px] text-[#d4d4d4]">
                <svg width="14" height="14" viewBox="0 0 14 14"><path d="M7 1l6 4-6 5-6-4z" fill="#d8d8d8" /><path d="M2 9v3l4 1" fill="none" stroke="#aaa" /></svg>
                <span><Cjk>凯华热插拔</Cjk>-SK6812-3528<Cjk>反贴</Cjk>.PcbLib</span>
              </div>
            </div>
            <div className="relative h-[1056px] shrink-0 bg-gradient-to-b from-white to-[#e0e0e0]">
              <Model />
              <div className="absolute left-0 top-0 flex h-[69px] w-[203px] flex-col bg-gradient-to-b from-[#2c3f4e] to-[#42708f] pl-[4px] pt-[6px] font-['Liberation_Sans',sans-serif] font-bold text-[#c9d1d6]">
                <div className="flex h-[15px] items-center text-[12px]"><span className="w-[24px]">x:</span><span className="w-[60px]">165.000</span><span className="w-[27px]">dx:</span><span className="w-[59px]">-440.000</span>mil</div>
                <div className="flex h-[15px] items-center text-[12px]"><span className="w-[24px]">y:</span><span className="w-[60px]">-70.000</span><span className="w-[27px]">dy:</span><span className="w-[59px]">1055.000</span>mil</div>
                <div className="mt-[1px] flex h-[17px] items-center text-[16px] text-[#f4f420]">Top Layer</div>
                <div className="mt-[1px] flex h-[13px] items-center text-[10px] text-[#b4c3cd]">Snap: 5mil Hotspot Snap: 8mil</div>
              </div>
              <div className="absolute left-[568px] top-[3px] flex h-[28px] w-[373px] items-center justify-between rounded-[3px] bg-[#3c3c3c] px-[8px]">
                {floatIcons.map((icon, i) => (
                  <div key={i} className="flex w-[20px] items-center justify-center">{icon}</div>
                ))}
              </div>
            </div>
            <div className="flex h-[22px] shrink-0 gap-[3px] bg-[#323232] pl-[3px]">
              <div className="flex h-[17px] w-[45px] items-center rounded-b-[2px] bg-[#555]">
                <div className="h-full w-[24px] bg-[#f00000]" /><span className="ml-[4px] text-[#e0e0e0]">LS</span>
              </div>
              <div className="w-[2px]" />
              <LayerTab w="w-[65px]" c="#f01010" on>[1] Top</LayerTab>
              <LayerTab w="w-[80px]" c="#0000f0">[2] Bottom</LayerTab>
              <LayerTab w="w-[53px]" c="#f4f400">T-Silk</LayerTab>
              <LayerTab w="w-[55px]" c="#808000">B-Silk</LayerTab>
              <LayerTab w="w-[72px]" c="#800080">T-Solder</LayerTab>
              <LayerTab w="w-[70px]" c="#f000f0">B-Solder</LayerTab>
            </div>
          </div>

          {/* right panel */}
          <div className="relative ml-[2px] flex w-[393px] shrink-0 flex-col">
            <div className="flex h-[24px] shrink-0 items-center justify-between bg-[#4a4a4a] pb-[1px] pl-[5px] pr-[6px] font-bold text-[#e4e4e4]">
              Properties
              <div className="flex items-center gap-[9px]"><Caret /><FaThumbtack size={9} className="text-[#ddd]" /><FaTimes size={9} className="text-[#ddd]" /></div>
            </div>
            <div className="flex h-[1058px] shrink-0 flex-col bg-[#404040] pl-[8px]">
              <div className="mt-[9px] flex h-[26px] w-[375px] shrink-0 items-center justify-between">
                <span className="-mt-[2px]">Library Options</span>
                <div className="flex items-center gap-[6px]">
                  <span className="-mt-[2px]">3D Bodies (and 9 more)</span>
                  <div className="flex h-[26px] overflow-hidden rounded-[3px] border border-[#2b2b2b]">
                    <div className="flex w-[28px] items-center justify-center bg-[#5b83ad]"><FaFilter size={11} className="text-white" /></div>
                    <div className="flex w-[14px] items-center justify-center border-l border-[#2b2b2b] bg-[#4a4a4a]"><Caret /></div>
                  </div>
                </div>
              </div>
              <div className="mt-[11px] flex h-[20px] w-[376px] shrink-0 items-center gap-[8px] rounded-[3px] bg-[#2f2f2f] pb-[1px] pl-[8px]">
                <FaSearch size={10} className="text-[#888]" />Search
              </div>
              <SectionTitle cls="mt-[18px]">Selection Filter</SectionTitle>
              <div className="mt-[4px] flex h-[91px] w-[368px] shrink-0 flex-col gap-[6px] bg-[#464646] pl-[6px] pt-[7px]">
                <Gray w="w-[90px] pb-[2px]">All objects</Gray>
                <div className="flex gap-[6px]">
                  <Blue w="w-[67px]">3D Bodies</Blue><Blue w="w-[64px]">Keepouts</Blue><Blue w="w-[47px]">Tracks</Blue><Blue w="w-[37px]">Arcs</Blue><Blue w="w-[40px]">Pads</Blue><Blue w="w-[37px]">Vias</Blue>
                </div>
                <div className="flex gap-[6px]">
                  <Blue w="w-[58px]">Regions</Blue><Blue w="w-[36px]">Fills</Blue><Blue w="w-[41px]">Texts</Blue><Blue w="w-[46px]">Other</Blue>
                </div>
              </div>
              <SectionTitle cls="mt-[14px]">Snap Options</SectionTitle>
              <div className="mt-[4px] flex h-[401px] w-[368px] shrink-0 flex-col bg-[#464646] px-[6px] pt-[7px]">
                <div className="flex gap-[5px]">
                  <Blue w="w-[43px]">Grids</Blue><Gray w="w-[53px]">Guides</Gray><Gray w="w-[40px]">Axes</Gray>
                </div>
                <div className="mt-[6px] flex h-[16px] shrink-0 items-center justify-between">
                  <span className="font-bold text-[#eee]">Snapping</span><span className="text-[#9a9a9a]">Shift+E</span>
                </div>
                <div className="mt-[4px] flex h-[22px] w-[356px] shrink-0 overflow-hidden rounded-[2px] border border-[#2b2b2b] text-center">
                  <div className="flex w-[119px] items-center justify-center bg-[#4c4c4c]">All Layers</div>
                  <div className="flex w-[118px] items-center justify-center bg-[#5b83ad] text-[#eef3f7]">Current Layer</div>
                  <div className="flex flex-1 items-center justify-center bg-[#4c4c4c]">Off</div>
                </div>
                <div className="mt-[5px] flex h-[16px] shrink-0 items-center font-bold text-[#eee]">Objects for snapping</div>
                <div className="mt-[4px] flex h-[243px] w-[356px] shrink-0 flex-col border border-[#262626] bg-[#3a3a3a]">
                  <div className="flex h-[20px] shrink-0 border-b border-[#262626] bg-[#444]">
                    <Th w="w-[50px]">On/Off</Th><Th w="w-[100px]">Objects</Th>
                  </div>
                  {snapObjects.map(([name, on], i) => (
                    <div key={name} className={`flex h-[20px] shrink-0 items-center ${i === 0 ? 'bg-[#5b83ad] text-[#f0f4f8]' : ''}`}>
                      <div className="flex w-[47px] justify-center"><Box on={on} dark={i === 0} /></div>
                      <span className="pl-[13px]">{name}</span>
                    </div>
                  ))}
                </div>
                <div className="mt-[6px] flex h-[21px] shrink-0 items-center gap-[12px]">
                  <span className="w-[140px] text-right">Snap Distance</span>
                  <div className="flex h-full w-[204px] items-center justify-between rounded-[3px] bg-[#2f2f2f] px-[6px]">8mil<Caret /></div>
                </div>
                <div className="mt-[4px] flex h-[21px] shrink-0 items-center gap-[12px]">
                  <span className="w-[140px] text-right">Axis Snap Range</span>
                  <div className="flex h-full w-[204px] items-center rounded-[3px] bg-[#2f2f2f] px-[6px]">1000mil</div>
                </div>
              </div>
              <SectionTitle cls="mt-[9px]">Grid Manager</SectionTitle>
              <div className="mt-[4px] flex h-[174px] w-[368px] shrink-0 flex-col border border-[#262626] bg-[#3a3a3a]">
                <div className="flex h-[20px] shrink-0 border-b border-[#262626] bg-[#444]">
                  <Th w="w-[60px]" sort>Prior...</Th><Th w="w-[191px]">Name</Th><Th w="w-[45px]">Color</Th><Th w="w-[70px]">Enabled</Th>
                </div>
                <div className="flex h-[20px] shrink-0 items-center">
                  <span className="w-[60px] pl-[10px]">50</span>
                  <span className="w-[191px] pl-[10px]">Global Board Snap Grid</span>
                  <div className="flex w-[45px] justify-center"><div className="h-[15px] w-[15px] border border-[#2f2f2f] bg-[#4e4e68]" /></div>
                  <div className="flex w-[70px] justify-center"><Box on /></div>
                </div>
                <div className="flex-1" />
                <div className="flex h-[33px] shrink-0 items-center justify-end gap-[5px] border-t border-[#262626] bg-[#464646] pr-[3px]">
                  <Btn w="w-[74px]">Add<Caret /></Btn>
                  <Btn w="w-[74px]" off>Properties</Btn>
                  <Btn w="w-[31px]" off><FaTrashAlt size={11} /></Btn>
                </div>
              </div>
              <SectionTitle cls="mt-[13px]">Guide Manager</SectionTitle>
              <div className="mt-[4px] flex h-[175px] w-[368px] shrink-0 flex-col border border-[#262626] bg-[#3a3a3a]">
                <div className="flex h-[20px] shrink-0 border-b border-[#262626] bg-[#444]">
                  <Th w="w-[60px]">Enabled</Th><Th w="w-[121px]">Name</Th><Th w="w-[70px]">X</Th><Th w="w-[70px]">Y</Th><Th w="w-[45px]">Color</Th>
                </div>
                <div className="flex-1" />
                <div className="flex h-[33px] shrink-0 items-center justify-end gap-[5px] border-t border-[#262626] bg-[#464646] pr-[3px]">
                  <Btn w="w-[74px]">Add<Caret /></Btn>
                  <Btn w="w-[74px]">Place<Caret /></Btn>
                  <Btn w="w-[31px]" off><FaTrashAlt size={11} /></Btn>
                </div>
              </div>
              <div className="-ml-[5px] mt-[7px] h-[14px] shrink-0 text-[#cfcfcf]">Nothing selected</div>
            </div>
            <div className="flex h-[22px] shrink-0 bg-[#323232] pt-[1px]">
              <DockTab w="w-[79px]">Components</DockTab>
              <DockTab w="w-[64px]" on>Properties</DockTab>
              <DockTab w="w-[114px]">View Configuration</DockTab>
            </div>
            {/* scrollbar */}
            <div className="absolute left-[380px] top-[111px] h-[829px] w-[6px] rounded-[3px] bg-[#6f6f6f]" />
          </div>
        </div>

        {/* messages row */}
        <div className="flex h-[29px] shrink-0 items-center gap-[3px] border-y border-[#2f2f2f] bg-[#434343] pl-[5px] pt-[2px]">
          <Btn w="w-[58px]" h="h-[19px]">Messages</Btn>
          <Btn w="w-[35px]" h="h-[19px]"><span className="text-[12px]">输出</span></Btn>
          <Btn w="w-[98px]" h="h-[19px]">Storage Manager</Btn>
        </div>

        {/* status bar */}
        <div className="flex h-[25px] shrink-0 items-center justify-between bg-[#3f3f3f] pl-[5px] pr-[5px] pt-[2px] text-[#c8c8c8]">
          <span>X:168.966mil Y:-66.05mil&nbsp;&nbsp;&nbsp;Grid: 5mil</span>
          <Btn w="w-[44px]" h="h-[17px]">Panels</Btn>
        </div>
      </div>
    </div>
  );
}
